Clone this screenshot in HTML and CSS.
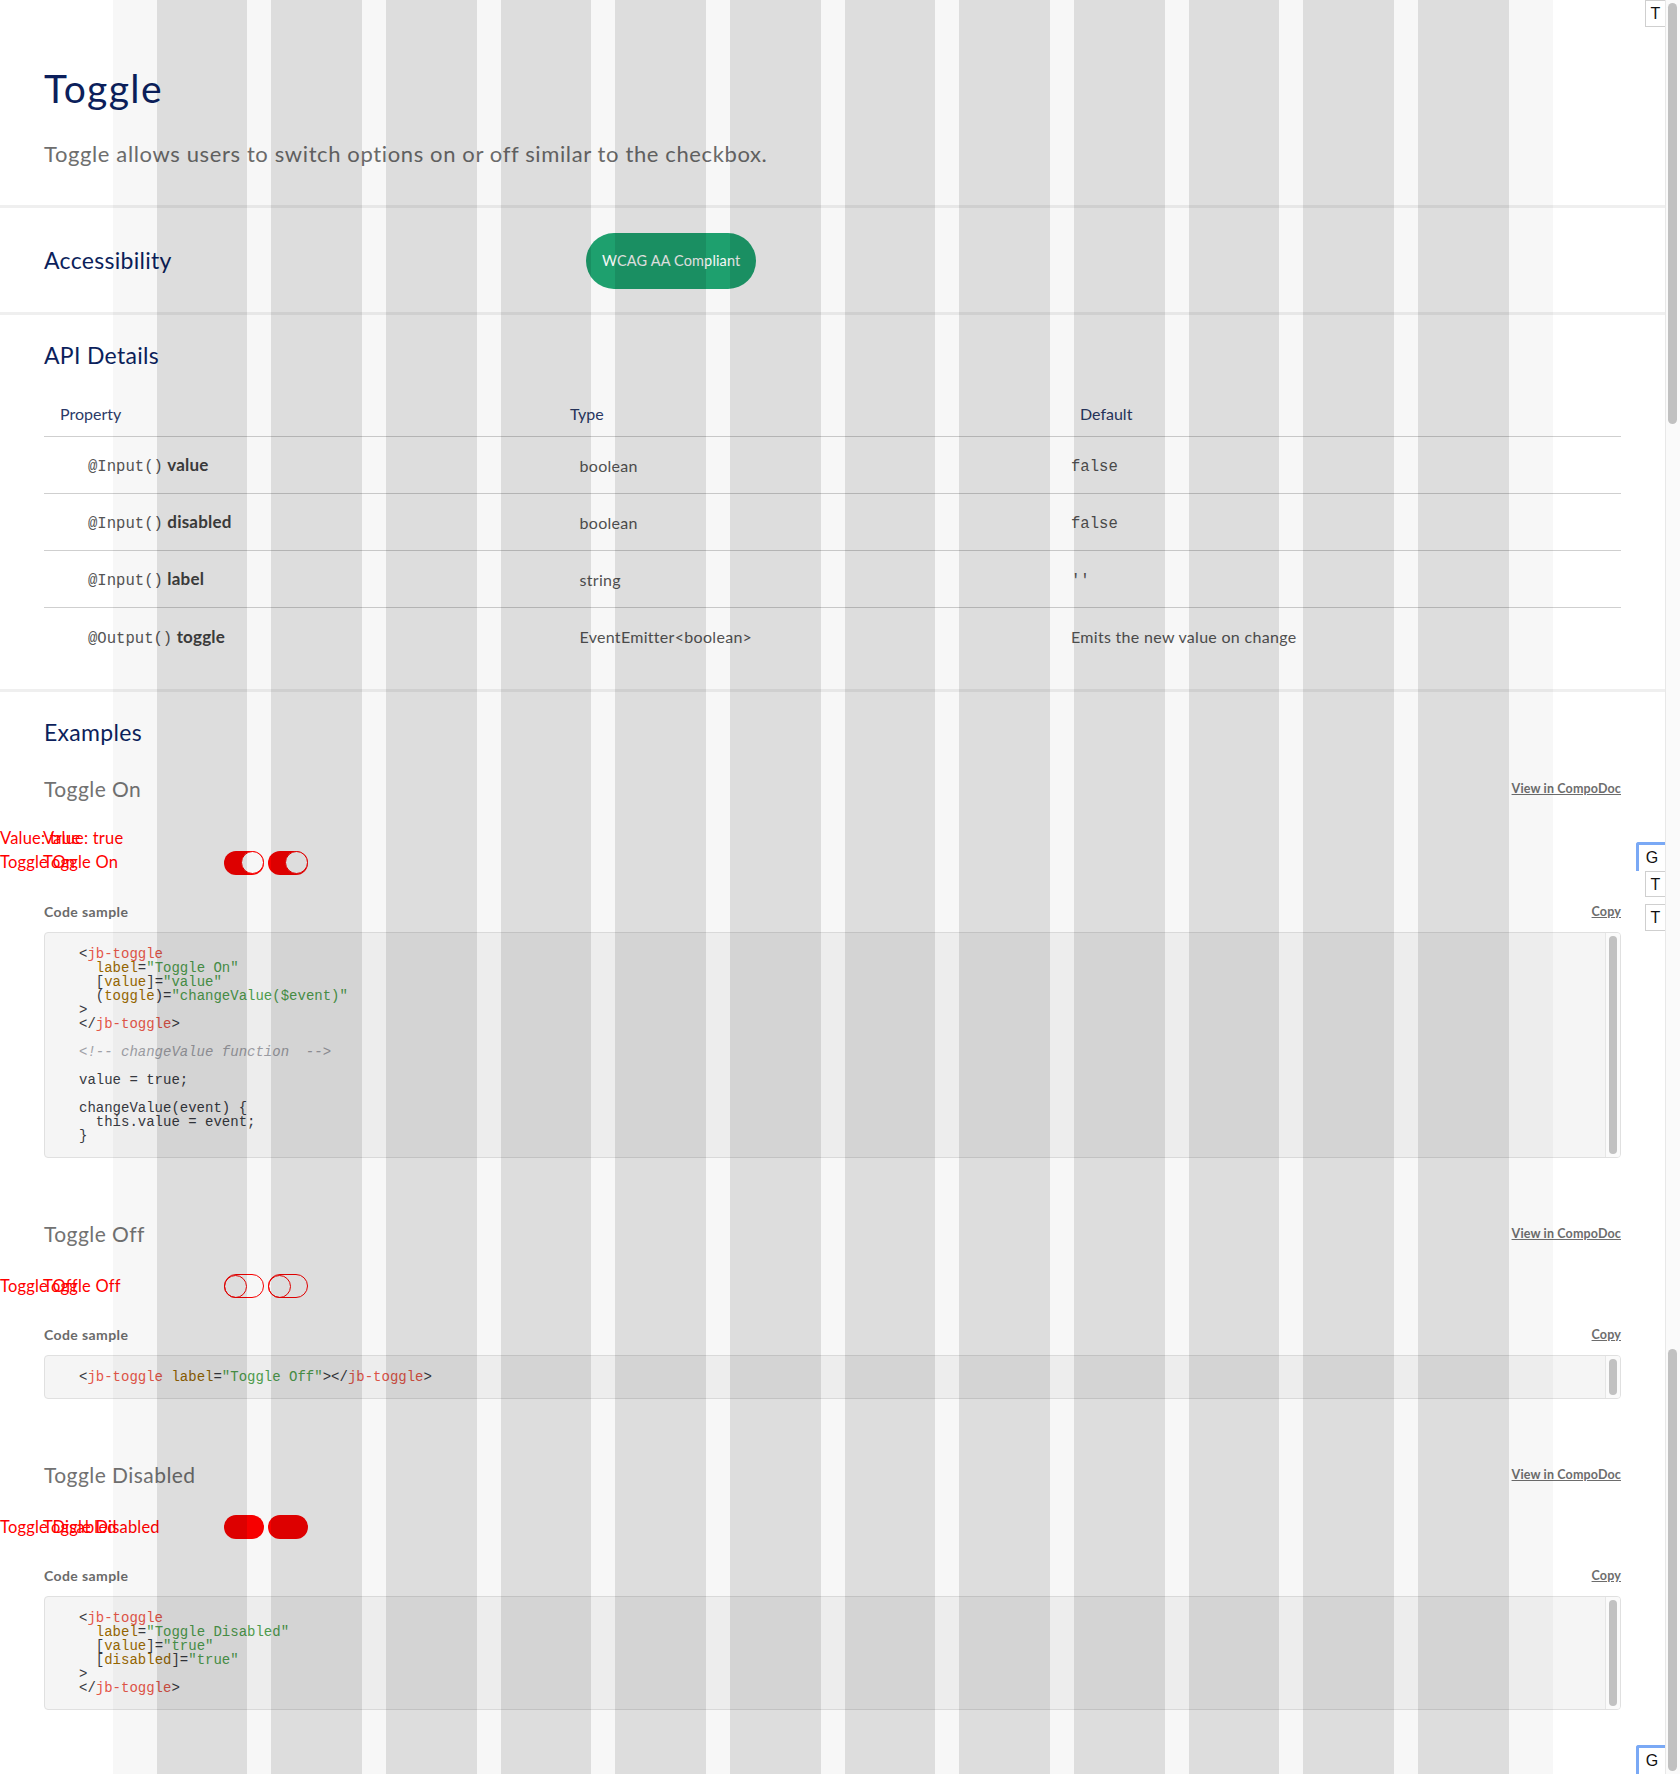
FILE: index.html
```html
<!DOCTYPE html>
<html lang="en">
<head>
<meta charset="utf-8">
<title>Toggle</title>
<link rel="stylesheet" href="styles.css">
</head>
<body>
<div class="page">
  <main class="main">
    <header class="intro">
      <h1 class="title">Toggle</h1>
      <p class="lead">Toggle allows users to switch options on or off similar to the checkbox.</p>
    </header>

    <section class="a11y">
      <h2 class="h2">Accessibility</h2>
      <div><span class="badge">WCAG AA Compliant</span></div>
    </section>

    <section class="api">
      <h2 class="h2">API Details</h2>
      <div class="thead">
        <div>Property</div><div class="th-type">Type</div><div class="th-def">Default</div>
      </div>
      <div class="trow">
        <div><code class="mono">@Input()</code> <b>value</b></div>
        <div>boolean</div>
        <div><code class="mono">false</code></div>
      </div>
      <div class="trow">
        <div><code class="mono">@Input()</code> <b>disabled</b></div>
        <div>boolean</div>
        <div><code class="mono">false</code></div>
      </div>
      <div class="trow">
        <div><code class="mono">@Input()</code> <b>label</b></div>
        <div>string</div>
        <div><code class="mono">''</code></div>
      </div>
      <div class="trow last">
        <div><code class="mono">@Output()</code> <b>toggle</b></div>
        <div>EventEmitter&lt;boolean&gt;</div>
        <div>Emits the new value on change</div>
      </div>
    </section>

    <section class="examples">
      <h2 class="h2">Examples</h2>

      <div class="example">
        <div class="ex-head"><h3 class="h3">Toggle On</h3><a class="link">View in CompoDoc</a></div>
        <div class="demo">
          <div class="dup"><span>Value: true</span><span>Value: true</span></div>
          <div class="demo-row">
            <div class="dup lbl"><span>Toggle On</span><span>Toggle On</span></div>
            <span class="tg on"><i></i></span><span class="tg on"><i></i></span>
          </div>
        </div>
        <div class="code-head"><span>Code sample</span><a class="link">Copy</a></div>
        <div class="code">
<pre><span class="p">&lt;</span><span class="t">jb-toggle</span>
  <span class="a">label</span><span class="p">=</span><span class="s">"Toggle On"</span>
  <span class="p">[</span><span class="a">value</span><span class="p">]=</span><span class="s">"value"</span>
  <span class="p">(</span><span class="a">toggle</span><span class="p">)=</span><span class="s">"changeValue($event)"</span>
<span class="p">&gt;</span>
<span class="p">&lt;/</span><span class="t">jb-toggle</span><span class="p">&gt;</span>

<span class="c">&lt;!-- changeValue function  --&gt;</span>

value = true;

changeValue(event) {
  this.value = event;
}</pre>
          <div class="vscroll"><i></i></div>
        </div>
      </div>

      <div class="example">
        <div class="ex-head"><h3 class="h3">Toggle Off</h3><a class="link">View in CompoDoc</a></div>
        <div class="demo">
          <div class="demo-row">
            <div class="dup lbl"><span>Toggle Off</span><span>Toggle Off</span></div>
            <span class="tg off"><i></i></span><span class="tg off"><i></i></span>
          </div>
        </div>
        <div class="code-head"><span>Code sample</span><a class="link">Copy</a></div>
        <div class="code">
<pre><span class="p">&lt;</span><span class="t">jb-toggle</span> <span class="a">label</span><span class="p">=</span><span class="s">"Toggle Off"</span><span class="p">&gt;&lt;/</span><span class="t">jb-toggle</span><span class="p">&gt;</span></pre>
          <div class="vscroll"><i></i></div>
        </div>
      </div>

      <div class="example">
        <div class="ex-head"><h3 class="h3">Toggle Disabled</h3><a class="link">View in CompoDoc</a></div>
        <div class="demo">
          <div class="demo-row">
            <div class="dup lbl"><span>Toggle Disabled</span><span>Toggle Disabled</span></div>
            <span class="tg dis"><i></i></span><span class="tg dis"><i></i></span>
          </div>
        </div>
        <div class="code-head"><span>Code sample</span><a class="link">Copy</a></div>
        <div class="code">
<pre><span class="p">&lt;</span><span class="t">jb-toggle</span>
  <span class="a">label</span><span class="p">=</span><span class="s">"Toggle Disabled"</span>
  <span class="p">[</span><span class="a">value</span><span class="p">]=</span><span class="s">"true"</span>
  <span class="p">[</span><span class="a">disabled</span><span class="p">]=</span><span class="s">"true"</span>
<span class="p">&gt;</span>
<span class="p">&lt;/</span><span class="t">jb-toggle</span><span class="p">&gt;</span></pre>
          <div class="vscroll"><i></i></div>
        </div>
      </div>
    </section>

    <div class="grid-overlay" aria-hidden="true">
      <div class="grid-cols">
        <span></span><span></span><span></span><span></span><span></span><span></span>
        <span></span><span></span><span></span><span></span><span></span><span></span>
      </div>
    </div>

    <div class="sbox tb1">T</div>
    <div class="sbox gb gb1">G</div>
    <div class="sbox tb2">T</div>
    <div class="sbox tb3">T</div>
    <div class="sbox gb gb2">G</div>
  </main>
  <div class="page-scroll"><i class="thumb th1"></i><i class="thumb th2"></i></div>
</div>
</body>
</html>
```

FILE: styles.css
```css
* { box-sizing: border-box; }
html, body { margin: 0; padding: 0; background: #fff; }
body { font-family: Lato, "Noto Sans", sans-serif; color: #444; }

.page { display: flex; min-height: 1774px; }
.main { position: relative; flex: 1; min-width: 0; overflow: hidden; }
.page-scroll {
  width: 15px; flex: none; border-left: 1px solid #e8e8e8; background: #fafafa;
  display: flex; flex-direction: column; justify-content: space-between; padding: 3px 0 3px 2px;
}
.thumb { display: block; width: 9px; border-radius: 5px; background: #c1c1c1; }
.th1 { height: 421px; }
.th2 { height: 422px; }

/* intro */
.intro { padding: 66px 44px 37.5px; border-bottom: 3px solid #efefef; }
.title { margin: 0; font-size: 39px; line-height: 45.6px; font-weight: 400; color: #0c1f5c; letter-spacing: 1.4px; }
.lead { margin: 29px 0 0; font-size: 22px; line-height: 26.4px; color: #6e6e6e; letter-spacing: 0.62px; }

.h2 { margin: 0; font-size: 23px; line-height: 1.2; font-weight: 400; color: #0c1f5c; letter-spacing: 0.3px; }

/* accessibility */
.a11y {
  display: grid; grid-template-columns: 542px auto; align-items: center;
  padding: 25px 44px 23px; border-bottom: 3px solid #efefef;
}
.badge {
  display: inline-flex; align-items: center; height: 56px; padding: 0 16px;
  border-radius: 28px; background: #1fa672; color: #fff; font-size: 14.5px; letter-spacing: 0.15px;
}

/* api */
.api { padding: 27px 44px 24px; border-bottom: 3px solid #efefef; }
.thead {
  display: grid; grid-template-columns: 510px 510px 1fr; margin-top: 35px;
  padding: 0 0 13px 16px; border-bottom: 1px solid #cfcfcf;
  font-size: 16px; line-height: 19px; color: #2b3a67;
}
.trow {
  display: grid; grid-template-columns: 491.5px 491.5px 1fr; align-items: center;
  height: 57px; padding-left: 44px; border-bottom: 1px solid #cfcfcf;
  font-size: 16px; color: #555; letter-spacing: 0.3px;
}
.trow.last { border-bottom: 0; }
.trow b { color: #444; font-weight: 700; font-size: 17px; letter-spacing: 0.2px; }
.mono { font-family: "Liberation Mono", "DejaVu Sans Mono", monospace; font-size: 15.6px; color: #555; letter-spacing: 0; }

/* examples */
.examples { padding: 27px 44px 40px; }
.example + .example { margin-top: 63px; }
.examples .h2 + .example { margin-top: 29px; }
.ex-head { display: flex; justify-content: space-between; align-items: center; }
.h3 { margin: 0; font-size: 21px; line-height: 1.2; font-weight: 400; color: #727272; letter-spacing: 0.45px; }
.link { font-size: 12.5px; font-weight: 700; color: #6d6d6d; text-decoration: underline; letter-spacing: 0.15px; }

.demo { margin: 28px 0 0 -44px; color: #ff0000; font-size: 16.5px; line-height: 19px; letter-spacing: 0.2px; }
.dup { display: grid; }
.dup > span { grid-area: 1 / 1; white-space: nowrap; }
.dup > span + span { margin-left: 43px; }
.demo-row { display: flex; align-items: center; gap: 4px; margin-top: 3px; }
.demo > .demo-row:first-child { margin-top: 0; }
.lbl { width: 220px; }
.tg { display: flex; align-items: center; width: 40px; height: 24px; border-radius: 12px; }
.tg i { display: block; width: 23px; height: 23px; border-radius: 50%; }
.tg.on { background: #ff0000; justify-content: flex-end; }
.tg.on i { background: #fff; border: 1px solid #ff0000; }
.tg.off { border: 1px solid #ff0000; justify-content: flex-start; }
.tg.off i { border: 1px solid #ff0000; margin-left: -1px; }
.tg.dis { background: #ff0000; }

.code-head {
  display: flex; justify-content: space-between; align-items: center; margin-top: 29px;
  font-size: 14px; line-height: 16px; font-weight: 700; color: #6b6b6b; letter-spacing: 0.4px;
}
.code-head .link { font-size: 12.5px; letter-spacing: 0.15px; }
.code {
  display: flex; margin-top: 12px; border: 1px solid #e0e0e0; border-radius: 4px;
  background: #f5f5f5; overflow: hidden;
}
.code pre {
  flex: 1; margin: 0; padding: 14px 0 14px 34px;
  font-family: "Liberation Mono", monospace; font-size: 14px; line-height: 14px; color: #383a42;
}
.code .p { color: #383a42; }
.code .t { color: #e45649; }
.code .a { color: #986801; }
.code .s { color: #50a14f; }
.code .c { color: #a0a1a7; font-style: italic; }
.vscroll { width: 15px; flex: none; border-left: 1px solid #e6e6e6; background: #fafafa; padding: 3px; }
.vscroll i { display: block; height: 100%; border-radius: 4px; background: #c1c1c1; }

/* grid overlay */
.grid-overlay {
  position: absolute; top: 0; bottom: 0; left: 112.5px; width: 1440px;
  background: rgba(0,0,0,0.031); pointer-events: none;
}
.grid-cols { display: flex; gap: 24px; height: 100%; padding: 0 44px; }
.grid-cols span { flex: 1; background: rgba(0,0,0,0.101); }

/* side boxes */
.sbox {
  position: absolute; right: 0; width: 20px; height: 27px; background: #fff;
  border: 1px solid #cfcfcf; border-right: 0;
  font-family: "Liberation Sans", Arial, sans-serif; font-size: 16px; line-height: 25px;
  text-align: center; color: #111;
}
.tb1 { top: 0; }
.tb2 { top: 871px; height: 26px; }
.tb3 { top: 904px; }
.gb { width: 29px; height: 29px; border: 3px solid #7aa9f5; border-right: 0; border-bottom: 0; border-radius: 3px 0 0 0; }
.gb1 { top: 842px; }
.gb2 { top: 1745px; }
```
